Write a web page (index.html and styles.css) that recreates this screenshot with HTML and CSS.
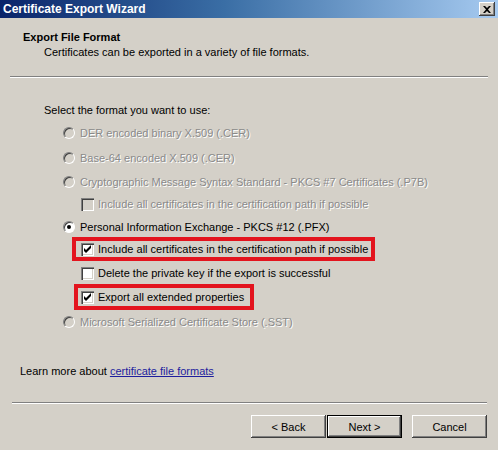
FILE: index.html
```html
<!DOCTYPE html>
<html>
<head>
<meta charset="utf-8">
<link rel="stylesheet" href="styles.css">
</head>
<body>
<div class="window">
  <div class="titlebar">
    <span class="title">Certificate Export Wizard</span>
    <span class="close"><svg width="8" height="7" viewBox="0 0 8 7"><path d="M0 0h2l2 2 2-2h2L5 3.5 8 7H6L4 5 2 7H0l3-3.5z" fill="#000"/></svg></span>
  </div>
  <div class="header">
    <div class="h-title">Export File Format</div>
    <div class="h-sub">Certificates can be exported in a variety of file formats.</div>
  </div>
  <div class="sep sep-top"></div>
  <div class="body">
    <div class="prompt">Select the format you want to use:</div>
    <div class="options">
      <div class="row disabled"><span class="radio"></span><span>DER encoded binary X.509 (.CER)</span></div>
      <div class="row disabled m1"><span class="radio"></span><span>Base-64 encoded X.509 (.CER)</span></div>
      <div class="row disabled"><span class="radio"></span><span>Cryptographic Message Syntax Standard - PKCS #7 Certificates (.P7B)</span></div>
      <div class="row sub disabled mn2"><span class="check"></span><span>Include all certificates in the certification path if possible</span></div>
      <div class="row mn1"><span class="radio on"></span><span>Personal Information Exchange - PKCS #12 (.PFX)</span></div>
      <div class="row sub hl hl1 mn2"><span class="check on"><svg width="13" height="13" viewBox="0 0 13 13"><path d="M3 5v3l2 2 5-5V2L5 7z" fill="#000"/></svg></span><span>Include all certificates in the certification path if possible</span></div>
      <div class="row sub"><span class="check white"></span><span>Delete the private key if the export is successful</span></div>
      <div class="row sub hl hl2"><span class="check on"><svg width="13" height="13" viewBox="0 0 13 13"><path d="M3 5v3l2 2 5-5V2L5 7z" fill="#000"/></svg></span><span>Export all extended properties</span></div>
      <div class="row disabled m1"><span class="radio"></span><span>Microsoft Serialized Certificate Store (.SST)</span></div>
    </div>
    <div class="learn">Learn more about <a class="link" href="#">certificate file formats</a></div>
  </div>
  <div class="sep sep-bottom"></div>
  <div class="buttons">
    <button class="btn back">&lt; Back</button>
    <button class="btn default">Next &gt;</button>
    <button class="btn cancel">Cancel</button>
  </div>
</div>
</body>
</html>
```
FILE: styles.css
```css
* { box-sizing: border-box; }
html, body { margin: 0; padding: 0; }
body {
  font-family: "Liberation Sans", Arial, sans-serif;
  font-size: 11px;
  color: #000;
  background: #d4d0c8;
}
.window {
  width: 498px;
  height: 450px;
  background: #d4d0c8;
  overflow: hidden;
}
.titlebar {
  height: 18px;
  display: flex;
  align-items: center;
  padding: 0 3px 0 3px;
  background: linear-gradient(to right, #0a246a 0%, #3a6ea5 45%, #a6caf0 100%);
}
.title {
  color: #fff;
  font-weight: bold;
  font-size: 12px;
  line-height: 18px;
}
.close {
  margin-left: auto;
  width: 16px;
  height: 14px;
  background: #d4d0c8;
  display: flex;
  align-items: center;
  justify-content: center;
  box-shadow: inset -1px -1px #404040, inset 1px 1px #fff, inset -2px -2px #808080;
}
.header {
  padding: 12px 0 0 23px;
  line-height: 14px;
}
.h-title { font-weight: bold; }
.h-sub { margin-top: 1px; padding-left: 21px; }
.sep {
  height: 2px;
  border-top: 1px solid #808080;
  border-bottom: 1px solid #fff;
}
.sep-top { margin: 17px 10px 0 10px; }
.body { line-height: 14px; }
.prompt { margin: 25px 0 0 44px; }
.options {
  margin-top: 4px;
  padding-left: 63px;
  display: flex;
  flex-direction: column;
}
.row {
  height: 24px;
  display: flex;
  align-items: center;
  gap: 5px;
  white-space: nowrap;
}
.row.sub { padding-left: 18px; gap: 4px; }
.m1 { margin-top: 1px; }
.mn1 { margin-top: -1px; }
.mn2 { margin-top: -2px; }
.disabled { color: #8a8a8a; text-shadow: 1px 1px 0 #fff; }
.radio {
  width: 12px;
  height: 12px;
  border-radius: 50%;
  border: 1px solid;
  border-color: #808080 #fff #fff #808080;
  background: #d4d0c8;
  box-shadow: inset 1px 1px #404040;
  display: flex;
  align-items: center;
  justify-content: center;
  flex: none;
}
.radio.on { background: #fff; }
.radio.on::after {
  content: "";
  width: 4px;
  height: 4px;
  border-radius: 50%;
  background: #000;
}
.check {
  width: 13px;
  height: 13px;
  flex: none;
  background: #d4d0c8;
  box-shadow: inset 1px 1px #808080, inset 2px 2px #404040, inset -1px -1px #fff, inset -2px -2px #d4d0c8;
  display: flex;
}
.check.white, .check.on { background: #fff; }
.row.hl {
  width: fit-content;
  border: 4px solid #e3141e;
}
.row.sub.hl1 {
  margin-left: 9px;
  padding-left: 5px;
  padding-right: 3px;
  height: 24px;
}
.row.sub.hl2 {
  margin-left: 11px;
  padding-left: 3px;
  padding-right: 6px;
  height: 26px;
  margin-top: -1px;
  margin-bottom: -1px;
}
.learn { margin: 30px 0 0 20px; }
.link { color: #1e1e9e; text-decoration: underline; }
.sep-bottom { margin: 24px 11px 0 12px; }
.buttons {
  display: flex;
  justify-content: flex-end;
  padding: 11px 11px 0 0;
}
.btn {
  font-family: inherit;
  font-size: 11px;
  width: 75px;
  height: 23px;
  background: #d4d0c8;
  color: #000;
  border: none;
  padding: 0;
  box-shadow: inset -1px -1px #404040, inset 1px 1px #fff, inset -2px -2px #808080;
}
.btn.back { margin-right: 1px; }
.btn.default {
  border: 1px solid #000;
}
.btn.cancel { margin-left: 10px; }
```
